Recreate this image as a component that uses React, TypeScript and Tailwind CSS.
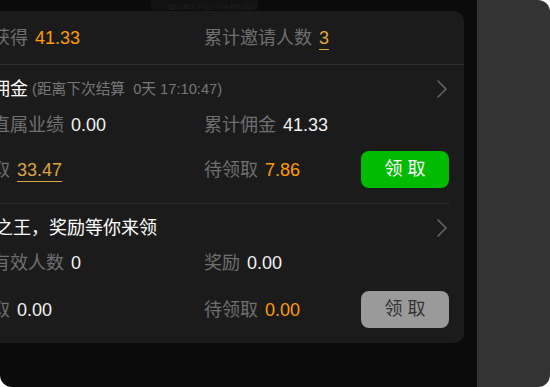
import React from "react";

const FONT = { fontFamily: '"Liberation Sans", "Noto Sans CJK SC", sans-serif' };

function Chevron() {
  return (
    <svg width="12" height="20" viewBox="0 0 12 20" className="shrink-0">
      <polyline points="2,2 10,10 2,18" fill="none" stroke="#666" strokeWidth="1.6" strokeLinecap="round" strokeLinejoin="round" />
    </svg>
  );
}

function Stat({ label, value, valueClass }: { label: string; value: string; valueClass: string }) {
  return (
    <div className="flex items-center whitespace-nowrap text-[18px] leading-[24px]">
      <span className="text-[#6f6f6f]">{label}</span>
      <span className={"ml-[7px] " + valueClass}>{value}</span>
    </div>
  );
}

function Claim({ active }: { active: boolean }) {
  return (
    <button
      className={
        "w-[88px] h-[37px] rounded-[8px] text-[18px] leading-[37px] whitespace-pre " +
        (active ? "bg-[#00bb00] text-white" : "bg-[#9a9a9a] text-[#333]")
      }
      style={FONT}
    >
      {"领 取"}
    </button>
  );
}

export default function App() {
  return (
    <div className="w-[550px] h-[387px] bg-white flex overflow-hidden" style={FONT}>
      <div className="relative w-[477px] h-full bg-[#0b0b0b] rounded-bl-[12px] overflow-hidden pt-[11px]">
        <div className="absolute left-[151px] top-0 w-[107px] h-[10px] bg-[#121212] rounded-b-[4px] overflow-hidden flex items-end gap-[5px] px-[10px]">
          <div className="w-[10px] h-[10px] rounded-full bg-[#242424] mb-[-4px]" />
          <div className="text-[12px] leading-[12px] text-[#1c1c1c] mb-[-7px] whitespace-nowrap">邀请好友 领取佣金奖励</div>
        </div>

        <div className="ml-[-60px] w-[524px] bg-[#1b1b1b] rounded-[10px]">
          <div className="h-[54px] pl-[16px] pr-[15px] pt-[1px] grid grid-cols-[248px_1fr] items-center border-b border-[#2f2f2f]">
            <Stat label="累计获得" value="41.33" valueClass="text-[#ff9c00]" />
            <Stat label="累计邀请人数" value="3" valueClass="text-[#e2a63c] underline decoration-[#e2a63c] underline-offset-[5px]" />
          </div>

          <div className="pl-[16px] pr-[15px]">
            <div className="pt-[12px] pb-[15px] border-b border-[#2f2f2f]">
              <div className="flex items-center justify-between h-[24px]">
                <div className="flex items-center whitespace-pre">
                  <span className="text-[18px] leading-[24px] text-white">我的佣金</span>
                  <span className="ml-[4px] text-[14.7px] leading-[24px] text-[#777]">{"(距离下次结算  0天 17:10:47)"}</span>
                </div>
                <div className="mr-[1px]"><Chevron /></div>
              </div>
              <div className="mt-[12px] grid grid-cols-[248px_1fr] items-center">
                <Stat label="团队直属业绩" value="0.00" valueClass="text-[#f2f2f2]" />
                <Stat label="累计佣金" value="41.33" valueClass="text-[#f2f2f2]" />
              </div>
              <div className="mt-[14px] grid grid-cols-[248px_1fr] items-center">
                <Stat label="已领取" value="33.47" valueClass="text-[#dca540] underline decoration-[#dca540] underline-offset-[5px]" />
                <div className="flex items-center justify-between">
                  <Stat label="待领取" value="7.86" valueClass="text-[#ff9c00]" />
                  <Claim active />
                </div>
              </div>
            </div>

            <div className="pt-[12px] pb-[15px]">
              <div className="flex items-center justify-between h-[24px]">
                <span className="text-[18px] leading-[24px] text-white whitespace-nowrap ml-[3px]">邀请之王，奖励等你来领</span>
                <div className="mr-[1px]"><Chevron /></div>
              </div>
              <div className="mt-[11px] grid grid-cols-[248px_1fr] items-center">
                <Stat label="团队有效人数" value="0" valueClass="text-[#f2f2f2]" />
                <Stat label="奖励" value="0.00" valueClass="text-[#f2f2f2]" />
              </div>
              <div className="mt-[16px] grid grid-cols-[248px_1fr] items-center">
                <Stat label="已领取" value="0.00" valueClass="text-[#f2f2f2]" />
                <div className="flex items-center justify-between">
                  <Stat label="待领取" value="0.00" valueClass="text-[#ff9c00]" />
                  <Claim active={false} />
                </div>
              </div>
            </div>
          </div>
        </div>
      </div>
      <div className="flex-1 h-full bg-[#333333] rounded-r-[12px]" />
    </div>
  );
}
